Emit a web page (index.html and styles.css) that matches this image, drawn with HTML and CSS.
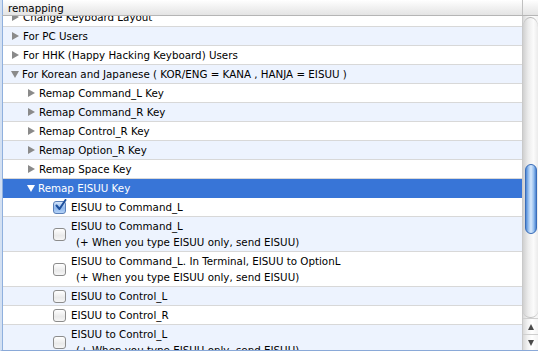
FILE: index.html
```html
<!DOCTYPE html>
<html lang="en">
<head>
    <meta charset="UTF-8">
    <title>remapping</title>
    <link rel="stylesheet" href="styles.css">
</head>
<body>

<div class="outline">
    <div class="header">
        <div class="col-name">remapping</div>
        <div class="col-corner"></div>
    </div>

    <div class="body">
        <div class="rows">
            <div class="row lvl0 cut"><span class="tri"></span>Change Keyboard Layout</div>
            <div class="row lvl0 alt"><span class="tri"></span>For PC Users</div>
            <div class="row lvl0"><span class="tri"></span>For HHK (Happy Hacking Keyboard) Users</div>
            <div class="row lvl0 alt"><span class="tri open"></span>For Korean and Japanese ( KOR/ENG = KANA , HANJA = EISUU )</div>
            <div class="row lvl1"><span class="tri"></span>Remap Command_L Key</div>
            <div class="row lvl1 alt"><span class="tri"></span>Remap Command_R Key</div>
            <div class="row lvl1"><span class="tri"></span>Remap Control_R Key</div>
            <div class="row lvl1 alt"><span class="tri"></span>Remap Option_R Key</div>
            <div class="row lvl1"><span class="tri"></span>Remap Space Key</div>
            <div class="row lvl1 selected"><span class="tri open"></span>Remap EISUU Key</div>

            <div class="row lvl2">
                <span class="check checked">
                    <svg width="13" height="13" viewBox="0 0 13 13">
                        <path d="M2.5 6.5 L5.5 10 L11.5 1" fill="none" stroke="#1d4f9c" stroke-width="2" stroke-linecap="round" stroke-linejoin="round"/>
                    </svg>
                </span>
                <span class="label">EISUU to Command_L</span>
            </div>
            <div class="row lvl2 alt">
                <span class="check"></span>
                <span class="label">EISUU to Command_L<br><span class="sub">(+ When you type EISUU only, send EISUU)</span></span>
            </div>
            <div class="row lvl2">
                <span class="check"></span>
                <span class="label">EISUU to Command_L. In Terminal, EISUU to OptionL<br><span class="sub">(+ When you type EISUU only, send EISUU)</span></span>
            </div>
            <div class="row lvl2 alt">
                <span class="check"></span>
                <span class="label">EISUU to Control_L</span>
            </div>
            <div class="row lvl2">
                <span class="check"></span>
                <span class="label">EISUU to Control_R</span>
            </div>
            <div class="row lvl2 alt">
                <span class="check"></span>
                <span class="label">EISUU to Control_L<br><span class="sub">(+ When you type EISUU only, send EISUU)</span></span>
            </div>
        </div>

        <div class="scrollbar">
            <div class="track">
                <div class="thumb"></div>
            </div>
            <div class="arrow up"><span></span></div>
            <div class="arrow down"><span></span></div>
        </div>
    </div>
</div>

</body>
</html>
```

FILE: styles.css
```css
body {
    margin: 0;
    font-family: "DejaVu Sans", Verdana, sans-serif;
    font-size: 10.3px;
    color: #000;
    background: #fff;
}
.outline {
    width: 538px;
    height: 351px;
    overflow: hidden;
    display: flex;
    flex-direction: column;
    border-left: 2px solid #d3e0f2;
    box-sizing: border-box;
    border-bottom: 1px solid #8aa9d8;
}
.header {
    display: flex;
    height: 15px;
    border-bottom: 1px solid #b5b5b5;
    background: linear-gradient(#ffffff, #f1f1f1 50%, #e4e4e4);
    flex-shrink: 0;
}
.col-name {
    flex: 1;
    padding-left: 5px;
    line-height: 16px;
    border-right: 1px solid #c0c0c0;
    border-left: 1px solid #8fb0de;
}
.col-corner {
    width: 15px;
}
.body {
    flex: 1;
    display: flex;
    min-height: 0;
}
.rows {
    flex: 1;
    overflow: hidden;
    border-left: 1px solid #8fb0de;
}
.row {
    display: flex;
    align-items: center;
    line-height: 16px;
    padding: 1px 0;
    border-bottom: 1px solid #d8d8d8;
    background: #fff;
    white-space: nowrap;
}
.row.alt {
    background: #edf3fe;
}
.row.cut {
    margin-top: -8px;
}
.row.selected {
    background: #3875d7;
    color: #fff;
    border-bottom-color: #3875d7;
}
.lvl0 {
    padding-left: 9px;
}
.lvl1 {
    padding-left: 25px;
}
.lvl2 {
    padding-left: 50px;
}
.tri {
    width: 0;
    height: 0;
    border-left: 7px solid #8a8a8a;
    border-top: 4px solid transparent;
    border-bottom: 4px solid transparent;
    margin-right: 4px;
}
.tri.open {
    border-left: 4px solid transparent;
    border-right: 4px solid transparent;
    border-top: 7px solid #8a8a8a;
    border-bottom: 0;
    margin-right: 3px;
    margin-left: -1px;
}
.selected .tri.open {
    border-top-color: #fff;
}
.check {
    width: 11px;
    height: 11px;
    border: 1px solid #8c8c8c;
    border-radius: 3px;
    background: linear-gradient(#ffffff, #eaeaea 60%, #f6f6f6);
    margin-right: 5px;
    position: relative;
    flex-shrink: 0;
}
.check.checked {
    border-color: #5a7fb8;
    background: linear-gradient(#d6e6fb, #8fb7ec 55%, #b5d3f7);
}
.check svg {
    position: absolute;
    left: 0;
    top: -3px;
}
.sub {
    padding-left: 5px;
}
.scrollbar {
    width: 15px;
    display: flex;
    flex-direction: column;
    background: linear-gradient(to right, #d9d9d9, #f1f1f1 30%, #ffffff 60%, #f3f3f3);
    border-left: 1px solid #c9c9c9;
}
.track {
    flex: 1;
    border-radius: 0 0 7px 7px;
    border-top-left-radius: 7px 10px;
    border-top-right-radius: 7px 10px;
    border-top: 1px solid #b9b9b9;
    border-bottom: 1px solid #c4c4c4;
    margin-top: 1px;
    position: relative;
    background: linear-gradient(to right, #d0d0d0, #ececec 35%, #fbfbfb 70%, #ebebeb);
}
.thumb {
    position: absolute;
    left: 2px;
    right: 1px;
    top: 146px;
    height: 70px;
    border-radius: 6px;
    border: 1px solid #3a6db8;
    box-sizing: border-box;
    background: linear-gradient(to right, #4f89d6, #a9ccf4 30%, #d6e8fc 50%, #9cc3f0 75%, #4a84d2);
}
.arrow {
    height: 15px;
    display: flex;
    align-items: center;
    justify-content: center;
    border-top: 1px solid #cfcfcf;
}
.arrow span {
    width: 0;
    height: 0;
    border-left: 3px solid transparent;
    border-right: 3px solid transparent;
}
.arrow.up span {
    border-bottom: 6px solid #4a4a4a;
}
.arrow.down span {
    border-top: 6px solid #4a4a4a;
}
```
